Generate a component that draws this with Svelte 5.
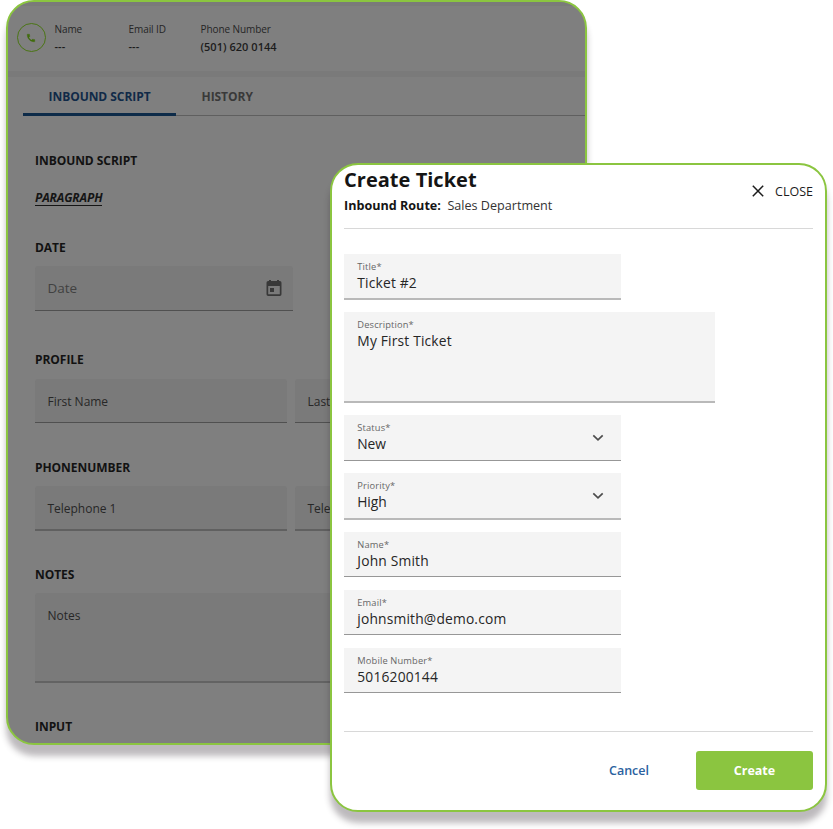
<script>
  const contact = [
    { label: 'Name', value: '---', width: 74 },
    { label: 'Email ID', value: '---', width: 72 },
    { label: 'Phone Number', value: '(501) 620 0144', width: 100 }
  ];

  const fields = [
    { label: 'Title*', value: 'Ticket #2', height: 46, gap: 12, soft: true },
    { label: 'Description*', value: 'My First Ticket', height: 91, gap: 12, wide: true, soft: true },
    { label: 'Status*', value: 'New', height: 46, gap: 12, select: true },
    { label: 'Priority*', value: 'High', height: 47, gap: 12, select: true, soft: true },
    { label: 'Name*', value: 'John Smith', height: 45, gap: 13 },
    { label: 'Email*', value: 'johnsmith@demo.com', height: 45, gap: 13 },
    { label: 'Mobile Number*', value: '5016200144', height: 45, gap: 0 }
  ];
</script>

<main class="stage">
  <section class="script-panel">
    <header class="caller">
      <div class="phone">
        <svg width="10" height="10" viewBox="0 0 24 24"><path fill="#416d0c" stroke="#416d0c" d="M6.6 10.8c1.4 2.8 3.8 5.1 6.6 6.6l2.2-2.2c.3-.3.7-.4 1-.2 1.1.4 2.3.6 3.6.6.6 0 1 .4 1 1V20c0 .6-.4 1-1 1C10.600 21 3 13.400 3 4c0-.6.4-1 1-1h3.500c.6 0 1 .4 1 1 0 1.200.2 2.500.6 3.600.1.300 0 .7-.2 1l-2.300 2.200z" /></svg>
      </div>
      {#each contact as item}
        <div class="contact" style="width: {item.width}px">
          <span class="contact-label">{item.label}</span>
          <span class="contact-value">{item.value}</span>
        </div>
      {/each}
    </header>
    <nav class="tabs">
      <span class="tab active">INBOUND SCRIPT</span>
      <span class="tab">HISTORY</span>
    </nav>
    <div class="script">
      <h3>INBOUND SCRIPT</h3>
      <p class="paragraph"><span>PARAGRAPH</span></p>

      <h3 class="after-paragraph">DATE</h3>
      <div class="box date">
        <span>Date</span>
        <svg width="16" height="18" viewBox="0 0 16 18"><path fill="#383838" fill-rule="evenodd" d="M3 1h2v1h6V1h2v1h.8Q15.500 2 15.500 3.700v11.600Q15.500 17 13.800 17H2.200Q.5 17 .5 15.300V3.700Q.5 2 2.200 2H3zM2.200 7v8.300h11.600V7zM4 9h4v4H4z" /></svg>
      </div>

      <h3 class="after-date">PROFILE</h3>
      <div class="pair">
        <div class="box">First Name</div>
        <div class="box">Last</div>
      </div>

      <h3 class="after-profile">PHONENUMBER</h3>
      <div class="pair phones">
        <div class="box">Telephone 1</div>
        <div class="box">Tele</div>
      </div>

      <h3 class="after-phone">NOTES</h3>
      <div class="box notes">Notes</div>

      <h3 class="after-notes">INPUT</h3>
    </div>
  </section>

  <section class="dialog">
    <header class="dialog-head">
      <div>
        <h1>Create Ticket</h1>
        <p class="route"><b>Inbound Route:</b><span>Sales Department</span></p>
      </div>
      <button class="close">
        <svg width="12" height="12" viewBox="0 0 12 12"><path d="M.8.8l10.400 10.400M11.200.8L.8 11.200" fill="none" stroke="#1c1c1c" stroke-width="1.500" /></svg>
        <span>CLOSE</span>
      </button>
    </header>
    <div class="form">
      {#each fields as field}
        <div class="field" class:wide={field.wide} class:soft={field.soft} class:select={field.select} style="height: {field.height}px; margin-bottom: {field.gap}px">
          <div>
            <span class="field-label">{field.label}</span>
            <span class="field-value">{field.value}</span>
          </div>
          {#if field.select}
            <svg class="chevron" width="12" height="8" viewBox="0 0 12 8"><path d="M1.300 1.300L6 5.800l4.700-4.500" fill="none" stroke="#4c4c4c" stroke-width="1.700" /></svg>
          {/if}
        </div>
      {/each}
    </div>
    <footer class="actions">
      <button class="cancel">Cancel</button>
      <button class="create">Create</button>
    </footer>
  </section>
</main>

<style>
  :global(body) { background: #fff; overflow: hidden; }
  * { box-sizing: border-box; }
  h1, h3, p { margin: 0; }
  button { border: 0; padding: 0; background: none; font: inherit; }
  svg { display: block; }
  .stage {
    position: relative;
    width: 833px;
    height: 829px;
    overflow: hidden;
    font-family: "Open Sans", "Noto Sans", sans-serif;
    white-space: nowrap;
  }
  .script-panel, .dialog {
    border: 2px solid #8bc540;
    box-shadow: 0 11px 6px rgba(35, 25, 35, 0.3);
    overflow: hidden;
  }
  .script-panel {
    width: 581px;
    height: 745px;
    margin-left: 6px;
    border-radius: 28px;
    background: #7f7f7f;
  }
  .caller {
    display: flex;
    height: 75px;
    padding: 15px 0 0 8.500px;
    border-top: 4px solid #7a7a7a;
    border-bottom: 6px solid #7a7a7a;
  }
  .phone {
    display: flex;
    align-items: center;
    justify-content: center;
    width: 29px;
    height: 29px;
    margin: 2px 9px 0 0;
    border: 1px solid #4b7515;
    border-radius: 50%;
  }
  .contact { display: flex; flex-direction: column; }
  .contact-label { font-size: 10px; line-height: 16px; letter-spacing: -0.08px; color: #252525; }
  .contact-value { font-size: 11px; font-weight: 600; line-height: 18px; margin-top: 1px; letter-spacing: 0.04px; color: #1c1c1c; }
  .tabs {
    display: flex;
    height: 39px;
    margin-left: 15px;
    border-bottom: 1px solid #5f5f5f;
  }
  .tab {
    height: 39px;
    padding: 0 25.500px;
    font-size: 12px;
    font-weight: 700;
    line-height: 40px;
    letter-spacing: -0.05px;
    color: #393939;
  }
  .tab.active { width: 153px; color: #102a48; border-bottom: 3px solid #0d2b49; }
  .script { padding: 36px 0 0 27px; }
  h3 { font-size: 12px; font-weight: 700; line-height: 18px; letter-spacing: -0.05px; color: #121212; }
  .paragraph {
    margin-top: 19px;
    font-size: 12px;
    font-weight: 700;
    font-style: italic;
    line-height: 18px;
    letter-spacing: -0.12px;
    color: #151515;
  }
  .paragraph span { border-bottom: 1px solid #151515; display: inline-block; line-height: 14px; }
  .after-paragraph { margin-top: 32px; }
  .after-date { margin-top: 40px; }
  .after-profile { margin-top: 36px; }
  .after-phone { margin-top: 35px; }
  .after-notes { margin-top: 35px; }
  .box {
    width: 252px;
    height: 44px;
    padding-left: 12.500px;
    border-bottom: 1px solid #505050;
    border-radius: 3px 3px 0 0;
    background: #7a7a7a;
    font-size: 12px;
    line-height: 45px;
    letter-spacing: -0.02px;
    color: #272727;
  }
  .date {
    display: flex;
    justify-content: space-between;
    align-items: center;
    width: 258px;
    height: 45px;
    margin-top: 9px;
    padding-right: 11.500px;
    font-size: 13.500px;
    letter-spacing: 0;
    color: #414141;
  }
  .pair { display: flex; gap: 8px; margin-top: 10px; }
  .pair .box { flex: none; }
  .phones { margin-top: 9px; }
  .phones .box { height: 45px; border-bottom: 2px solid #606060; }
  .notes { width: 512px; height: 90px; margin-top: 9px; border-bottom: 2px solid #636363; }
  .dialog {
    position: absolute;
    left: 330px;
    top: 163px;
    width: 497px;
    height: 649px;
    padding: 0 12px;
    border-radius: 28px;
    background: #fff;
  }
  .dialog-head {
    display: flex;
    justify-content: space-between;
    height: 64px;
    border-bottom: 1px solid #d8d8d8;
  }
  h1 { font-size: 20px; font-weight: 700; line-height: 30px; letter-spacing: 0.03px; color: #151515; }
  .route { display: flex; gap: 6.500px; margin-top: 2px; font-size: 12.600px; line-height: 18px; color: #333; }
  .route b { color: #151515; }
  .close {
    display: flex;
    align-items: center;
    gap: 11px;
    height: 18px;
    margin-top: 17px;
    font-size: 12.500px;
    font-weight: 500;
    color: #1c1c1c;
  }
  .form { height: 502px; padding-top: 25px; }
  .field {
    display: flex;
    justify-content: space-between;
    width: 277px;
    padding: 7px 17px 0 13.300px;
    border-bottom: 1px solid #979797;
    background: #f4f4f4;
  }
  .field.wide { width: 371px; }
  .field.soft { border-bottom: 2px solid #b9b9b9; }
  .field-label, .field-value { display: block; }
  .field-label { font-size: 9.300px; line-height: 12px; letter-spacing: 0.15px; color: #666; }
  .field-value { font-size: 13.800px; line-height: 20px; letter-spacing: 0.18px; color: #262626; }
  .select .field-value { letter-spacing: -0.1px; }
  .chevron { margin-top: 12px; }
  .actions {
    display: flex;
    justify-content: flex-end;
    align-items: flex-start;
    padding-top: 19px;
    border-top: 1px solid #d8d8d8;
    font-size: 12.500px;
    font-weight: 600;
  }
  .cancel { width: 134px; height: 39px; color: #2b62a0; }
  .create {
    width: 117px;
    height: 39px;
    border-radius: 3px;
    background: #8bc540;
    color: #fff;
    font-weight: 700;
  }
</style>
